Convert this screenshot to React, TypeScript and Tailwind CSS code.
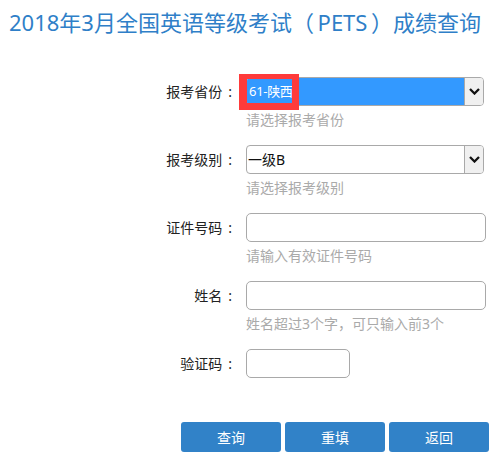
import React from "react";

const font = {
  fontFamily: '"Noto Sans", "Noto Sans CJK SC", sans-serif',
};

function Chevron() {
  return (
    <svg width="11" height="7" viewBox="0 0 11 7" fill="none">
      <path d="M1 1L5.5 5.5L10 1" stroke="#111" strokeWidth="2.3" />
    </svg>
  );
}

function Row({
  label,
  hint,
  children,
}: {
  label: string;
  hint?: string;
  children: React.ReactNode;
}) {
  return (
    <div className="flex mb-[15px]">
      <div className="w-[235px] h-[29px] leading-[29px] text-right text-[14px] text-[#222] pr-[3px]">
        {label}
        <span className="ml-[6px]">:</span>
      </div>
      <div className="ml-[11px]">
        {children}
        {hint && (
          <div className="mt-[4px] h-[20px] leading-[20px] text-[14px] text-[#aaaaaa]">
            {hint}
          </div>
        )}
      </div>
    </div>
  );
}

export default function App() {
  return (
    <div className="w-[496px] h-[458px] bg-white relative" style={font}>
      {/* Title */}
      <h1 className="pt-[7px] pl-[9px] h-[37px] text-[22px] leading-[30px] text-[#2f7fc8] font-normal whitespace-nowrap">
        2018年3月全国英语等级考试（{"\u2009"}PETS{"\u2009"}）成绩查询
      </h1>

      <div className="mt-[40px]">
        <Row label="报考省份" hint="请选择报考省份">
          <div className="w-[238px] h-[29px] border border-[#a9a9a9] rounded-[4px] flex overflow-hidden">
            <div className="flex-1 bg-[#3399ff] text-white text-[13px] tracking-[-0.3px] leading-[27px] pl-[2px]">
              61-陕西
            </div>
            <div className="w-[19px] border-l border-[#a9a9a9] bg-[#f0f0f0] flex items-center justify-center">
              <Chevron />
            </div>
          </div>
        </Row>
        <Row label="报考级别" hint="请选择报考级别">
          <div className="w-[238px] h-[29px] border border-[#a9a9a9] rounded-[4px] flex overflow-hidden">
            <div className="flex-1 text-[#111] text-[14px] leading-[27px] pl-[1px]">
              一级B
            </div>
            <div className="w-[19px] border-l border-[#a9a9a9] bg-[#f0f0f0] flex items-center justify-center">
              <Chevron />
            </div>
          </div>
        </Row>
        <Row label="证件号码" hint="请输入有效证件号码">
          <input className="block w-[240px] h-[29px] border border-[#a9a9a9] rounded-[5px] outline-none" />
        </Row>
        <Row label="姓名" hint="姓名超过3个字，可只输入前3个">
          <input className="block w-[240px] h-[29px] border border-[#a9a9a9] rounded-[5px] outline-none" />
        </Row>
        <Row label="验证码">
          <input className="block w-[104px] h-[29px] border border-[#a9a9a9] rounded-[5px] outline-none" />
        </Row>
      </div>

      {/* Buttons */}
      <div className="mt-[44px] ml-[181px] flex gap-[4px]">
        {["查询", "重填", "返回"].map((t) => (
          <button
            key={t}
            className="w-[100px] h-[30px] rounded-[3px] bg-[#3182c8] text-white text-[14px]"
          >
            {t}
          </button>
        ))}
      </div>

      {/* red highlight annotation */}
      <div className="absolute left-[239px] top-[74px] w-[60px] h-[36px] border-[#ff3b3b] border-l-[8px] border-t-[5px] border-r-[7px] border-b-[7px]" />
    </div>
  );
}
